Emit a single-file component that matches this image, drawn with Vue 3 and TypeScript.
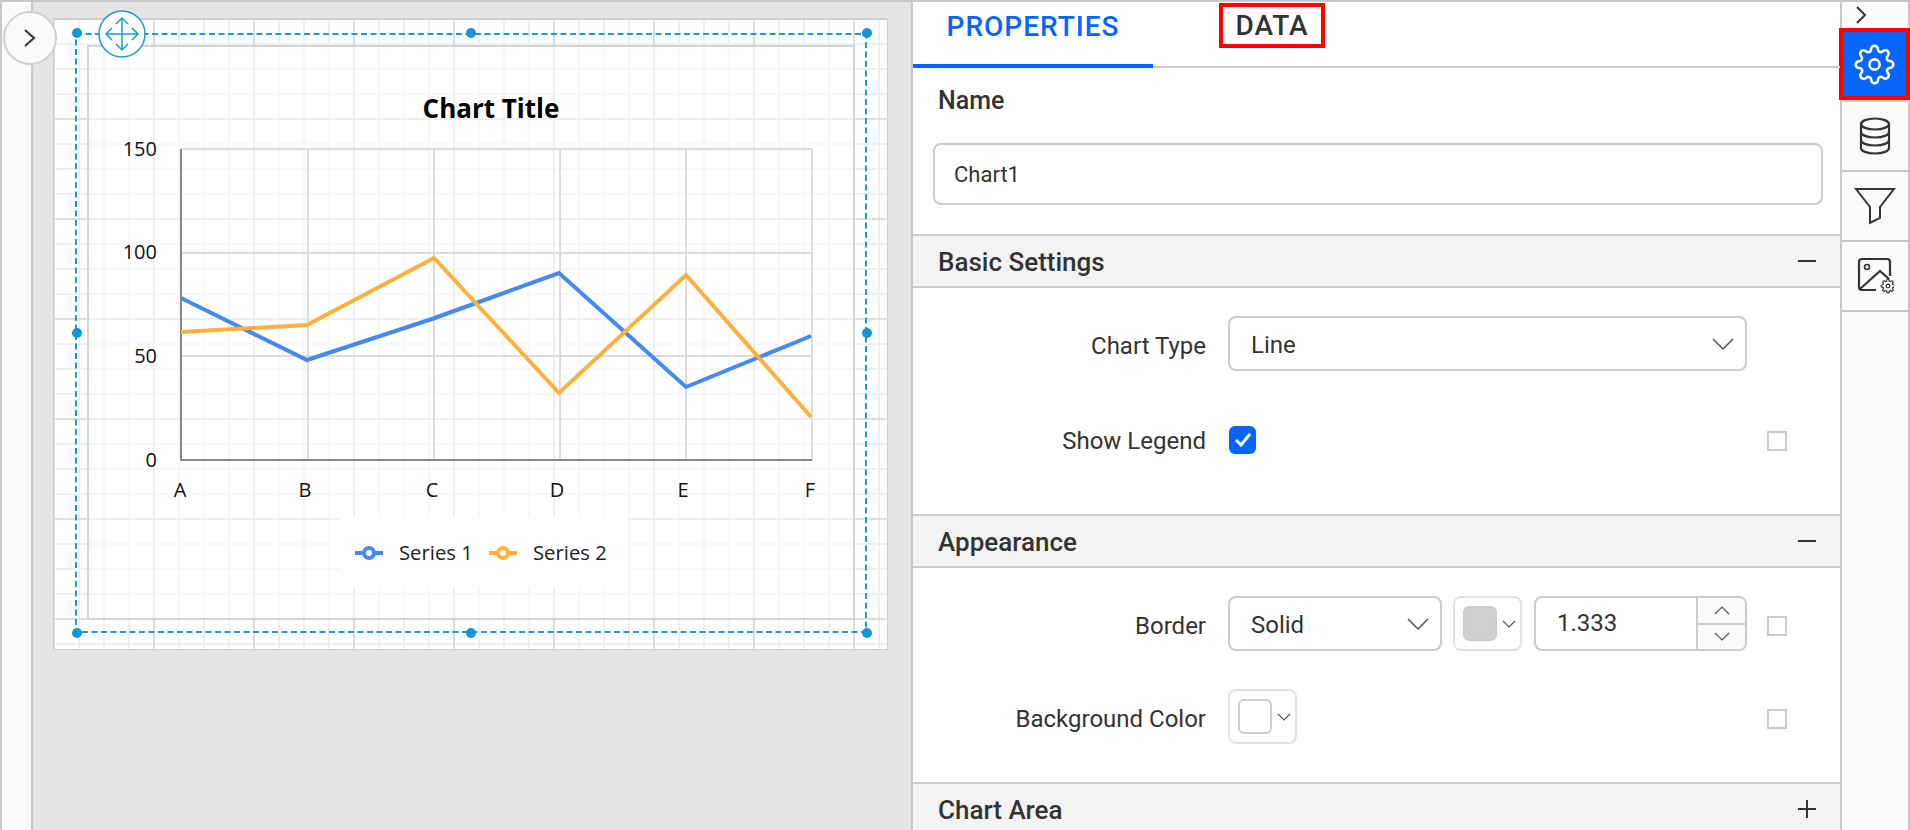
<script setup lang="ts">
const blue: [number, number][] = [[181, 298], [307, 360], [432, 319], [559, 273], [686, 387], [811, 336]]
const orange: [number, number][] = [[181, 332], [307, 325], [434, 258], [559, 393], [686, 275], [811, 417]]
const toPoints = (p: [number, number][]) => p.map((q) => q.join(',')).join(' ')
const bluePts = toPoints(blue)
const orangePts = toPoints(orange)
const gridX = [308, 434, 560, 686, 812]
const gridY = [149, 253, 356]
const yLabels = [{ t: '150', y: 156 }, { t: '100', y: 259 }, { t: '50', y: 363 }, { t: '0', y: 467 }]
const xLabels = [{ t: 'A', x: 180 }, { t: 'B', x: 305 }, { t: 'C', x: 432 }, { t: 'D', x: 557 }, { t: 'E', x: 683 }, { t: 'F', x: 810 }]
const handles = [[77, 33], [471, 33], [867, 33], [77, 333], [867, 333], [77, 633], [471, 633], [867, 633]]
const gear = 'M19.4 15a1.65 1.65 0 0 0 .33 1.82l.06.06a2 2 0 0 1 0 2.83 2 2 0 0 1-2.83 0l-.06-.06a1.65 1.65 0 0 0-1.82-.33 1.65 1.65 0 0 0-1 1.51V21a2 2 0 0 1-2 2 2 2 0 0 1-2-2v-.09A1.65 1.65 0 0 0 9 19.4a1.65 1.65 0 0 0-1.82.33l-.06.06a2 2 0 0 1-2.83 0 2 2 0 0 1 0-2.83l.06-.06a1.65 1.65 0 0 0 .33-1.82 1.65 1.65 0 0 0-1.51-1H3a2 2 0 0 1-2-2 2 2 0 0 1 2-2h.09A1.65 1.65 0 0 0 4.6 9a1.65 1.65 0 0 0-.33-1.82l-.06-.06a2 2 0 0 1 0-2.83 2 2 0 0 1 2.83 0l.06.06a1.65 1.65 0 0 0 1.82.33H9a1.65 1.65 0 0 0 1-1.51V3a2 2 0 0 1 2-2 2 2 0 0 1 2 2v.09a1.65 1.65 0 0 0 1 1.51 1.65 1.65 0 0 0 1.82-.33l.06-.06a2 2 0 0 1 2.83 0 2 2 0 0 1 0 2.83l-.06.06a1.65 1.65 0 0 0-.33 1.82V9a1.65 1.65 0 0 0 1.51 1H21a2 2 0 0 1 2 2 2 2 0 0 1-2 2h-.09a1.65 1.65 0 0 0-1.51 1z'
</script>

<template>
  <div class="app">
    <div class="rail"></div>
    <button class="collapse" type="button" aria-label="Expand">
      <svg width="14" height="20" viewBox="0 0 14 20"><path d="M2 2l9 8-9 8" fill="none" stroke="#333" stroke-width="2" /></svg>
    </button>

    <div class="canvas">
      <div class="surface">
        <svg class="art" width="835" height="632" viewBox="53 18 835 632">
          <rect x="88" y="46" width="766" height="573" fill="#fff" fill-opacity="0.5" stroke="#d4d4d4" stroke-width="2" />
          <g stroke="#ddd" stroke-width="2" fill="none">
            <line v-for="x in gridX" :key="x" :x1="x" y1="149" :x2="x" y2="460" />
            <line v-for="y in gridY" :key="y" x1="181" :y1="y" x2="812" :y2="y" />
          </g>
          <path d="M181 149V460H812" fill="none" stroke="#888" stroke-width="2" />
          <text x="491" y="118" text-anchor="middle" class="title">Chart Title</text>
          <text v-for="l in yLabels" :key="l.t" x="157" :y="l.y" text-anchor="end" class="axis">{{ l.t }}</text>
          <text v-for="l in xLabels" :key="l.t" :x="l.x" y="497" text-anchor="middle" class="axis">{{ l.t }}</text>
          <polyline :points="bluePts" fill="none" stroke="#4589f5" stroke-width="4" />
          <polyline :points="orangePts" fill="none" stroke="#fdb03c" stroke-width="4" />

          <rect x="340" y="516" width="288" height="72" fill="#fff" />
          <g fill="#fff" stroke-width="4">
            <line x1="355" y1="553" x2="383" y2="553" stroke="#4589f5" />
            <circle cx="369" cy="553" r="5" stroke="#4589f5" />
            <line x1="489" y1="553" x2="517" y2="553" stroke="#fdb03c" />
            <circle cx="503" cy="553" r="5" stroke="#fdb03c" />
          </g>
          <text x="399" y="560" class="legend">Series 1</text>
          <text x="533" y="560" class="legend">Series 2</text>

          <rect x="76" y="34" width="790" height="598" fill="none" stroke="#1a9ad6" stroke-width="2" stroke-dasharray="6 3.5" />
          <circle v-for="h in handles" :key="h.join()" :cx="h[0]" :cy="h[1]" r="5" fill="#1296db" />
          <circle cx="122" cy="34" r="23" fill="#fff" stroke="#1a9ad6" stroke-width="1.5" />
          <path d="M107 34H137M122 19V49M112 28l-6 6 6 6M132 28l6 6-6 6M116 24l6-6 6 6M116 44l6 6 6-6" fill="none" stroke="#1a9ad6" stroke-width="1.5" />
        </svg>
      </div>
    </div>

    <div class="panel">
      <div class="tabs">
        <div class="tab active">PROPERTIES</div>
        <div class="tab data">DATA</div>
      </div>
      <div class="name-block">
        <div class="name-label">Name</div>
        <div class="field name-field">Chart1</div>
      </div>

      <div class="section-head">
        <span>Basic Settings</span>
        <svg class="sign" width="18" height="18" viewBox="0 0 18 18"><path d="M0 9H18" stroke="#333" stroke-width="2" /></svg>
      </div>
      <div class="section-body first">
        <div class="row">
          <label>Chart Type</label>
          <div class="controls">
            <div class="field select wide">
              <span>Line</span>
              <svg class="chev" width="22" height="12" viewBox="0 0 22 12"><path d="M1 1l10 10L21 1" fill="none" stroke="#555" stroke-width="1.5" /></svg>
            </div>
          </div>
        </div>
        <div class="row">
          <label>Show Legend</label>
          <div class="controls">
            <span class="check">
              <svg width="20" height="18" viewBox="0 0 20 18"><path d="M3 9l5 5 9-11" fill="none" stroke="#fff" stroke-width="3" /></svg>
            </span>
          </div>
          <span class="box"></span>
        </div>
      </div>

      <div class="section-head">
        <span>Appearance</span>
        <svg class="sign" width="18" height="18" viewBox="0 0 18 18"><path d="M0 9H18" stroke="#333" stroke-width="2" /></svg>
      </div>
      <div class="section-body second">
        <div class="row">
          <label>Border</label>
          <div class="controls">
            <div class="field select solid">
              <span>Solid</span>
              <svg class="chev" width="22" height="12" viewBox="0 0 22 12"><path d="M1 1l10 10L21 1" fill="none" stroke="#555" stroke-width="1.5" /></svg>
            </div>
            <div class="swatch">
              <span class="chip grey"></span>
              <svg width="14" height="8" viewBox="0 0 14 8"><path d="M1 1l6 6 6-6" fill="none" stroke="#555" stroke-width="1.2" /></svg>
            </div>
            <div class="field number">
              <span class="value">1.333</span>
              <div class="spin">
                <div><svg width="16" height="9" viewBox="0 0 16 9"><path d="M1 8l7-7 7 7" fill="none" stroke="#555" stroke-width="1.2" /></svg></div>
                <div><svg width="16" height="9" viewBox="0 0 16 9"><path d="M1 1l7 7 7-7" fill="none" stroke="#555" stroke-width="1.2" /></svg></div>
              </div>
            </div>
          </div>
          <span class="box"></span>
        </div>
        <div class="row">
          <label>Background Color</label>
          <div class="controls">
            <div class="swatch">
              <span class="chip"></span>
              <svg width="14" height="8" viewBox="0 0 14 8"><path d="M1 1l6 6 6-6" fill="none" stroke="#555" stroke-width="1.2" /></svg>
            </div>
          </div>
          <span class="box"></span>
        </div>
      </div>

      <div class="section-head">
        <span>Chart Area</span>
        <svg class="sign" width="18" height="18" viewBox="0 0 18 18"><path d="M0 9H18M9 0V18" stroke="#333" stroke-width="2" /></svg>
      </div>
    </div>

    <div class="sidebar">
      <div class="side-top">
        <svg width="12" height="18" viewBox="0 0 12 18"><path d="M2 1l8 8-8 8" fill="none" stroke="#333" stroke-width="2" /></svg>
      </div>
      <div class="side-slot">
        <div class="side-on">
          <svg width="41" height="41" viewBox="0 0 24 24" fill="none" stroke="#fff" stroke-width="1.5">
            <circle cx="12" cy="12" r="3" />
            <path :d="gear" />
          </svg>
        </div>
      </div>
      <div class="side-btn">
        <svg width="32" height="38" viewBox="0 0 32 38" fill="none" stroke="#333" stroke-width="2.2">
          <ellipse cx="16" cy="7" rx="14" ry="5.5" />
          <path d="M2 7V31C2 34 8 36.500 16 36.500S30 34 30 31V7M2 15C2 18 8 20.500 16 20.500S30 18 30 15M2 23C2 26 8 28.500 16 28.500S30 26 30 23" />
        </svg>
      </div>
      <div class="side-btn">
        <svg width="42" height="38" viewBox="0 0 42 38" fill="none" stroke="#333" stroke-width="2">
          <path d="M2 2H40L26 20V31L16 36V20Z" />
        </svg>
      </div>
      <div class="side-btn">
        <svg width="38" height="38" viewBox="0 0 38 38" fill="none" stroke="#333" stroke-width="2.2">
          <path d="M20 33H6A3 3 0 0 1 3 30V5A3 3 0 0 1 6 2H31A3 3 0 0 1 34 5V19" />
          <circle cx="11" cy="10" r="2.500" stroke-width="1.600" />
          <path d="M4 32L24 14L33 22" />
          <g transform="translate(24.500 21.500) scale(0.62)" stroke-width="2" fill="#fafafa">
            <path :d="gear" />
            <circle cx="12" cy="12" r="3" />
          </g>
        </svg>
      </div>
      <div class="side-rest"></div>
    </div>
  </div>
</template>

<style scoped>
.app {
  position: relative;
  display: flex;
  width: 1910px;
  height: 830px;
  box-sizing: border-box;
  border-top: 2px solid #c8c8c8;
  border-left: 2px solid #c8c8c8;
  overflow: hidden;
  font-family: Roboto, "Liberation Sans", sans-serif;
  color: #333;
  background: #fff;
}
.rail {
  width: 29px;
  flex: none;
  background: #fafafa;
  border-right: 2px solid #c8c8c8;
}
.collapse {
  position: absolute;
  left: 1px;
  top: 9px;
  width: 54px;
  height: 54px;
  padding: 0;
  display: flex;
  align-items: center;
  justify-content: center;
  border: 2px solid #cfcfcf;
  border-radius: 50%;
  background: #fafafa;
  z-index: 2;
}
.canvas {
  width: 880px;
  flex: none;
  box-sizing: border-box;
  padding: 16px 0 0 20px;
  background: #e5e5e5;
  border-right: 2px solid #c8c8c8;
}
.surface {
  width: 835px;
  height: 632px;
  box-sizing: border-box;
  border: 1px solid #cfcfcf;
  border-top-width: 2px;
  position: relative;
  background-color: #fff;
  background-image:
    linear-gradient(to right, #dedede 2px, transparent 2px),
    linear-gradient(to bottom, #dedede 2px, transparent 2px),
    linear-gradient(to right, #f0f0f0 2px, transparent 2px),
    linear-gradient(to bottom, #f0f0f0 2px, transparent 2px);
  background-size: 100px 100px, 100px 100px, 25px 25px, 25px 25px;
  background-position: 99px 0, 0 98px, 24px 0, 0 23px;
  background-repeat: repeat;
  background-clip: padding-box;
}
.art {
  position: absolute;
  left: -1px;
  top: -2px;
  display: block;
  overflow: visible;
}
.title {
  font: 700 26px "Open Sans", sans-serif;
  fill: #000;
}
.axis {
  font: 400 20px "Open Sans", sans-serif;
  fill: #111;
}
.legend {
  font: 400 20.3px "Open Sans", sans-serif;
  fill: #222;
}
.panel {
  width: 927px;
  flex: none;
  display: flex;
  flex-direction: column;
  background: #fff;
}
.tabs {
  height: 66px;
  flex: none;
  box-sizing: border-box;
  position: relative;
  display: flex;
  align-items: flex-start;
  border-bottom: 2px solid #ccc;
}
.tab {
  font-size: 28px;
  font-weight: 500;
  letter-spacing: 1px;
  line-height: 44px;
  padding-top: 3px;
}
.tab.active {
  width: 240px;
  height: 66px;
  flex: none;
  box-sizing: border-box;
  text-align: center;
  color: #0565ff;
  border-bottom: 4px solid #0565ff;
}
.tab.data {
  width: 106px;
  margin-left: 66px;
  margin-top: 1px;
  padding: 0;
  height: 45px;
  box-sizing: border-box;
  text-align: center;
  border: 4px solid #f00;
  line-height: 38px;
}
.name-block {
  height: 166px;
  flex: none;
  box-sizing: border-box;
  padding: 18px 17px 0 20px;
}
.name-label {
  font-size: 25px;
  font-weight: 500;
  padding-left: 5px;
  line-height: 30px;
  margin-bottom: 27px;
}
.field {
  box-sizing: border-box;
  border: 2px solid #ccc;
  border-radius: 8px;
  font-size: 24px;
  background: #fff;
}
.name-field {
  height: 62px;
  line-height: 60px;
  padding-left: 19px;
  font-size: 22px;
}
.section-head {
  height: 54px;
  flex: none;
  box-sizing: border-box;
  display: flex;
  align-items: center;
  justify-content: space-between;
  padding: 0 24px 0 25px;
  font-size: 26px;
  font-weight: 500;
  background: #f3f3f3;
  border-top: 2px solid #ccc;
  border-bottom: 2px solid #ccc;
}
.section-head span {
  padding-top: 2px;
}
.section-body {
  flex: none;
  box-sizing: border-box;
  display: flex;
  flex-direction: column;
}
.section-body.first {
  height: 226px;
  padding-top: 28px;
  gap: 40px;
}
.section-body.second {
  height: 214px;
  padding-top: 28px;
  gap: 38px;
}
.row {
  height: 55px;
  display: flex;
  align-items: center;
}
.row label {
  width: 293px;
  text-align: right;
  font-size: 24px;
  flex: none;
  margin-top: 4px;
}
.controls {
  width: 519px;
  margin-left: 22px;
  flex: none;
  display: flex;
  align-items: center;
}
.select {
  height: 55px;
  display: flex;
  align-items: center;
  justify-content: space-between;
  padding: 0 11px 0 21px;
}
.select span {
  padding-top: 2px;
}
.select.wide {
  width: 519px;
}
.select.solid {
  width: 214px;
}
.check {
  width: 27px;
  height: 28px;
  margin: 2px 0 0 1px;
  display: flex;
  align-items: center;
  justify-content: center;
  border-radius: 6px;
  background: #0565ff;
}
.box {
  width: 20px;
  height: 20px;
  box-sizing: border-box;
  margin-left: 20px;
  margin-top: 4px;
  border: 2px solid #ccc;
}
.swatch {
  width: 69px;
  height: 55px;
  box-sizing: border-box;
  margin: 0 12px 0 11px;
  display: flex;
  align-items: center;
  gap: 5px;
  padding-left: 8px;
  border: 2px solid #e3e3e3;
  border-radius: 8px;
}
.row:last-child .swatch {
  margin-left: 0;
}
.chip {
  width: 34px;
  height: 35px;
  box-sizing: border-box;
  border: 2px solid #ccc;
  border-radius: 6px;
  background: #fff;
}
.chip.grey {
  background: #cfcfcf;
}
.number {
  width: 213px;
  height: 55px;
  display: flex;
  align-items: stretch;
}
.value {
  flex: 1;
  padding-left: 21px;
  line-height: 51px;
}
.spin {
  width: 47px;
  flex: none;
  display: flex;
  flex-direction: column;
  border-left: 2px solid #ccc;
  background: #fafafa;
  border-radius: 0 6px 6px 0;
}
.spin div {
  flex: 1;
  display: flex;
  align-items: center;
  justify-content: center;
}
.spin div:first-child {
  border-bottom: 2px solid #ccc;
}
.sidebar {
  flex: 1;
  display: flex;
  flex-direction: column;
  background: #fafafa;
  border-left: 2px solid #c8c8c8;
  border-right: 2px solid #c8c8c8;
}
.side-top {
  height: 26px;
  flex: none;
  display: flex;
  align-items: center;
  padding-left: 13px;
}
.side-slot {
  height: 74px;
  flex: none;
  box-sizing: border-box;
  border-bottom: 2px solid #c8c8c8;
}
.side-on {
  height: 72px;
  box-sizing: border-box;
  margin: 0 -2px 0 -3px;
  display: flex;
  align-items: center;
  justify-content: center;
  background: #0565ff;
  border: 4px solid #f00;
}
.side-btn {
  height: 70px;
  flex: none;
  box-sizing: border-box;
  display: flex;
  align-items: center;
  justify-content: center;
  border-bottom: 2px solid #c8c8c8;
}
.side-rest {
  flex: 1;
}
</style>

<style>
html,
body {
  margin: 0;
  padding: 0;
  overflow: hidden;
}
</style>
